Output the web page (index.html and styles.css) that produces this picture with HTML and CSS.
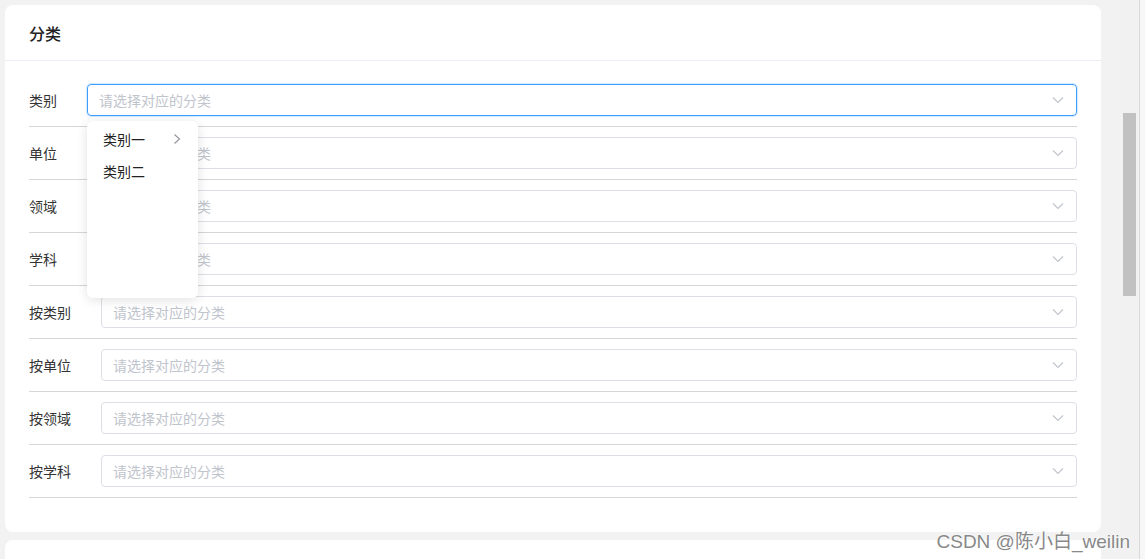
FILE: index.html
```html
<!DOCTYPE html>
<html lang="zh">
<head>
<meta charset="utf-8">
<title>分类</title>
<link rel="stylesheet" href="styles.css">
</head>
<body>
<div class="page">
  <div class="card">
    <div class="card-header">分类</div>
    <div class="card-body">
      <div class="row">
        <span class="label">类别</span>
        <div class="select is-focus">
          <span class="placeholder">请选择对应的分类</span>
          <svg class="chev" width="12" height="8" viewBox="0 0 12 8"><path d="M1 1.5 L6 6.5 L11 1.5" fill="none" stroke="#c0c4cc" stroke-width="1.1"/></svg>
          <div class="dropdown">
            <div class="item"><span>类别一</span><svg width="8" height="12" viewBox="0 0 8 12"><path d="M1.5 1.5 L6.5 6 L1.5 10.5" fill="none" stroke="#909399" stroke-width="1.1"/></svg></div>
            <div class="item"><span>类别二</span></div>
          </div>
        </div>
      </div>
      <div class="row">
        <span class="label">单位</span>
        <div class="select"><span class="placeholder">请选择对应的分类</span><svg class="chev" width="12" height="8" viewBox="0 0 12 8"><path d="M1 1.5 L6 6.5 L11 1.5" fill="none" stroke="#c0c4cc" stroke-width="1.1"/></svg></div>
      </div>
      <div class="row">
        <span class="label">领域</span>
        <div class="select"><span class="placeholder">请选择对应的分类</span><svg class="chev" width="12" height="8" viewBox="0 0 12 8"><path d="M1 1.5 L6 6.5 L11 1.5" fill="none" stroke="#c0c4cc" stroke-width="1.1"/></svg></div>
      </div>
      <div class="row">
        <span class="label">学科</span>
        <div class="select"><span class="placeholder">请选择对应的分类</span><svg class="chev" width="12" height="8" viewBox="0 0 12 8"><path d="M1 1.5 L6 6.5 L11 1.5" fill="none" stroke="#c0c4cc" stroke-width="1.1"/></svg></div>
      </div>
      <div class="row">
        <span class="label">按类别</span>
        <div class="select"><span class="placeholder">请选择对应的分类</span><svg class="chev" width="12" height="8" viewBox="0 0 12 8"><path d="M1 1.5 L6 6.5 L11 1.5" fill="none" stroke="#c0c4cc" stroke-width="1.1"/></svg></div>
      </div>
      <div class="row">
        <span class="label">按单位</span>
        <div class="select"><span class="placeholder">请选择对应的分类</span><svg class="chev" width="12" height="8" viewBox="0 0 12 8"><path d="M1 1.5 L6 6.5 L11 1.5" fill="none" stroke="#c0c4cc" stroke-width="1.1"/></svg></div>
      </div>
      <div class="row">
        <span class="label">按领域</span>
        <div class="select"><span class="placeholder">请选择对应的分类</span><svg class="chev" width="12" height="8" viewBox="0 0 12 8"><path d="M1 1.5 L6 6.5 L11 1.5" fill="none" stroke="#c0c4cc" stroke-width="1.1"/></svg></div>
      </div>
      <div class="row">
        <span class="label">按学科</span>
        <div class="select"><span class="placeholder">请选择对应的分类</span><svg class="chev" width="12" height="8" viewBox="0 0 12 8"><path d="M1 1.5 L6 6.5 L11 1.5" fill="none" stroke="#c0c4cc" stroke-width="1.1"/></svg></div>
      </div>
    </div>
  </div>
  <div class="card card-next"></div>
</div>
<div class="scrollbar"><div class="thumb"></div></div>
<div class="edge"></div>
<div class="watermark">CSDN @陈小白_weilin</div>
</body>
</html>
```
FILE: styles.css
```css
html, body {
  margin: 0;
  padding: 0;
  height: 559px;
  overflow: hidden;
}
body {
  display: flex;
  background: #f2f2f2;
  font-family: "Noto Sans CJK SC", "Noto Sans", "Liberation Sans", sans-serif;
  color: #333;
  position: relative;
}
.page {
  width: 1121px;
  padding: 5px 20px 0 5px;
  box-sizing: border-box;
  display: flex;
  flex-direction: column;
  gap: 8px;
}
.card {
  background: #fff;
  border-radius: 8px;
  width: 1096px;
  flex: none;
}
.card-next {
  height: 60px;
}
.card-header {
  height: 56px;
  box-sizing: border-box;
  padding: 0 24px;
  display: flex;
  align-items: center;
  font-size: 16px;
  font-weight: 500;
  color: #222;
  border-bottom: 1px solid #ebeef5;
}
.card-body {
  padding: 13px 24px 34px 24px;
}
.row {
  display: flex;
  align-items: center;
  padding: 10px 0;
  border-bottom: 1px solid #d6d6d6;
}
.label {
  font-size: 14px;
  color: #333;
  margin-right: 30px;
  white-space: nowrap;
}
.select {
  position: relative;
  flex: 1;
  height: 32px;
  box-sizing: border-box;
  border: 1px solid #dcdfe6;
  border-radius: 4px;
  padding: 0 12px 0 11px;
  display: flex;
  align-items: center;
  justify-content: space-between;
}
.select.is-focus {
  border-color: #409eff;
  box-shadow: 0 0 1px 1px rgba(64, 158, 255, 0.25);
}
.placeholder {
  font-size: 14px;
  color: #c0c4cc;
}
.chev {
  display: block;
}
.dropdown {
  position: absolute;
  left: -1px;
  top: 36px;
  width: 111px;
  height: 177px;
  box-sizing: border-box;
  padding: 2px 0;
  background: #fff;
  border-radius: 6px;
  box-shadow: 0 2px 12px rgba(0, 0, 0, 0.12);
  z-index: 5;
}
.item {
  height: 32px;
  padding: 0 17px 0 16px;
  display: flex;
  align-items: center;
  justify-content: space-between;
  font-size: 14px;
  color: #222;
}
.item svg {
  display: block;
}
.scrollbar {
  width: 18px;
  background: #f1f1f1;
  border-right: 1px solid #dadada;
  flex: none;
  position: relative;
}
.thumb {
  position: absolute;
  left: 2px;
  top: 113px;
  width: 13px;
  height: 183px;
  background: #c1c1c1;
}
.edge {
  flex: 1;
  background: #f7f7f7;
}
.watermark {
  position: absolute;
  right: 15px;
  top: 526px;
  font-family: "Liberation Sans", "Noto Sans CJK SC", sans-serif;
  font-size: 19px;
  color: #888;
  text-shadow: 0 0 2px #fff, 0 0 2px #fff, 0 0 1px #fff;
  white-space: nowrap;
}
```
